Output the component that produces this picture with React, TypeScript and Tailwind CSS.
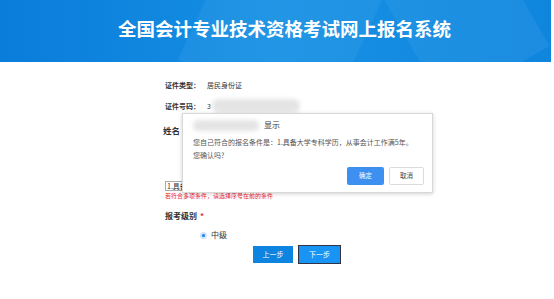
import React from 'react';

const FONT = '"Noto Sans CJK SC", "Liberation Sans", sans-serif';

const Blur: React.FC<{ className: string }> = ({ className }) => (
  <span className={`inline-block rounded-full bg-[#e4e4e4] blur-[2px] ${className}`} />
);

const App: React.FC = () => {
  return (
    <div className="relative w-[554px] h-[299px] overflow-hidden bg-white text-[#333]" style={{ fontFamily: FONT }}>
      {/* header */}
      <div className="relative w-[551px] h-[62px] overflow-hidden bg-gradient-to-r from-[#0a7cda] via-[#1690e4] to-[#0f86de]">
        <div className="absolute left-[200px] -top-10 w-[160px] h-[140px] rotate-[25deg] bg-white/5" />
        <div className="absolute left-[400px] -top-16 w-[120px] h-[150px] -rotate-[30deg] bg-white/5" />
        <div className="relative pl-[118px] pt-[14px] text-[18.5px] leading-[28px] font-bold text-white">
          全国会计专业技术资格考试网上报名系统
        </div>
      </div>

      {/* form */}
      <div className="pl-[165px] pt-[17px] text-[8px] whitespace-nowrap">
        <div className="flex items-center h-[12px] text-[7px]">
          <span className="font-bold w-[42px] shrink-0">证件类型：</span>
          <span>居民身份证</span>
        </div>
        <div className="flex items-center h-[12px] mt-[9px] text-[7px]">
          <span className="font-bold w-[42px] shrink-0">证件号码：</span>
          <span>3</span>
          <Blur className="w-[88px] h-[14px] ml-[1px]" />
        </div>
        <div className="flex items-center h-[12px] mt-[12px] -ml-[2px]">
          <span className="font-bold text-[8.5px]">姓名</span>
        </div>
        <div className="mt-[45px] w-[200px] h-[10px] border border-[#aaa] flex items-center pl-[1px] text-[7px]">
          1.具备大学专科学历
        </div>
        <div className="mt-[1px] text-[6px] leading-[8px] text-[#e8262d]">若符合多项条件，请选择序号在前的条件</div>
        <div className="mt-[10px] flex items-center h-[12px] font-bold">
          报考级别<span className="ml-[3px] text-[#e8262d]">*</span>
        </div>
        <div className="mt-[7px] ml-[35px] flex items-center h-[12px]">
          <span className="w-[7px] h-[7px] rounded-full bg-[#cfe3fb] flex items-center justify-center">
            <span className="w-[3px] h-[3px] rounded-full bg-[#1a7fe8]" />
          </span>
          <span className="ml-[4px]">中级</span>
        </div>
        <div className="mt-[5px] ml-[88px] flex gap-[5px] text-[7px]">
          <button type="button" className="w-[40px] h-[17px] bg-[#0c84e0] text-white">上一步</button>
          <button type="button" className="w-[43px] h-[19px] -mt-[1px] bg-[#1894f5] text-white border border-[#334]">下一步</button>
        </div>
      </div>

      {/* confirm dialog */}
      <div className="absolute left-[182px] top-[113px] w-[251px] h-[80px] bg-white border border-[#d8d8d8] shadow-[0_1px_4px_rgba(0,0,0,0.18)] text-[7px] text-[#555] whitespace-nowrap">
        <div className="flex items-center mt-[5px] ml-[10px] h-[12px]">
          <Blur className="w-[66px] h-[11px]" />
          <span className="ml-[5px] text-[8px] text-[#333]">显示</span>
        </div>
        <div className="mt-[5px] ml-[10px] leading-[13px]">
          <div>您自己符合的报名条件是：1.具备大学专科学历，从事会计工作满5年。</div>
          <div>您确认吗?</div>
        </div>
        <div className="flex justify-end gap-[5px] mr-[8px] mt-[5px] text-[6.5px]">
          <button type="button" className="w-[37px] h-[18px] rounded-[2px] bg-[#3d8ff0] text-white">确定</button>
          <button type="button" className="w-[35px] h-[18px] rounded-[2px] bg-white border border-[#dcdcdc] text-[#444]">取消</button>
        </div>
      </div>
    </div>
  );
};

export default App;
